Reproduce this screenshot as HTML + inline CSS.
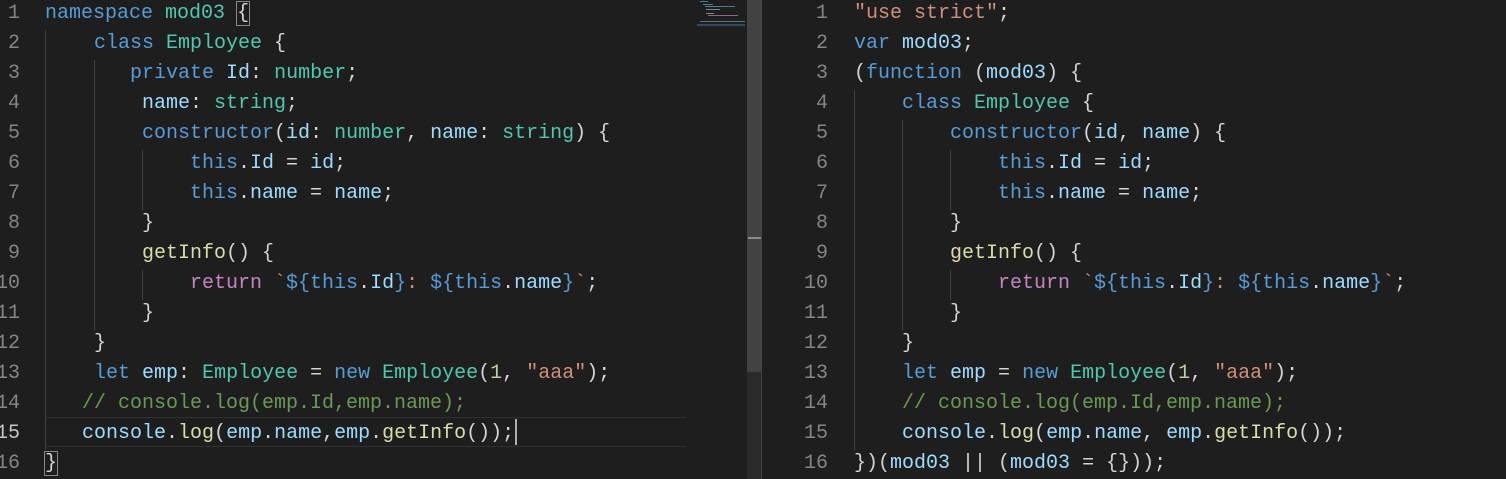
<!DOCTYPE html>
<html><head><meta charset="utf-8">
<style>
html,body{margin:0;padding:0;background:#1e1e1e;width:1506px;height:479px;overflow:hidden;}
body{position:relative;font-family:"Liberation Mono",monospace;font-size:20px;color:#d4d4d4;}
.l{position:absolute;height:30px;line-height:28px;white-space:pre;}
.n{position:absolute;height:30px;line-height:28px;color:#858585;text-align:right;width:40px;}
.k{color:#569cd6}.t{color:#4ec9b0}.v{color:#9cdcfe}.f{color:#dcdcaa}.s{color:#ce9178}.c{color:#6a9955}.r{color:#c586c0}.m{color:#b5cea8}
.g{position:absolute;width:1px;background:#404040;}
.box{outline:1px solid #888;}
</style></head><body>
<div style="position:absolute;left:747px;top:0;width:15px;height:479px;background:#2a2a2a"></div>
<div style="position:absolute;left:747px;top:0;width:14px;height:372px;background:#424242"></div>
<div style="position:absolute;left:748px;top:237px;width:13px;height:2px;background:#8a8a8a"></div>
<div style="position:absolute;left:761px;top:0;width:1px;height:479px;background:#444"></div>
<div style="position:absolute;left:700px;top:1px;width:8px;height:1px;background:#4a7a9a"></div>
<div style="position:absolute;left:703px;top:4px;width:10px;height:1px;background:#3f8a7a"></div>
<div style="position:absolute;left:705px;top:6px;width:30px;height:1px;background:#5a7a8a"></div>
<div style="position:absolute;left:706px;top:9px;width:14px;height:1px;background:#6a8aa0"></div>
<div style="position:absolute;left:706px;top:13px;width:8px;height:1px;background:#8a8a6a"></div>
<div style="position:absolute;left:708px;top:15px;width:30px;height:1px;background:#8a6a8a"></div>
<div style="position:absolute;left:700px;top:21px;width:45px;height:1px;background:#5a7a6a"></div>
<div style="position:absolute;left:697px;top:24px;width:48px;height:2px;background:#2c4a66"></div>

<div style="position:absolute;left:45px;top:417px;width:641px;height:1px;background:#303030"></div>
<div style="position:absolute;left:45px;top:446px;width:641px;height:1px;background:#303030"></div>

<div class="g" style="left:45px;top:30px;height:420px"></div>
<div class="g" style="left:94px;top:60px;height:270px"></div>
<div class="g" style="left:142px;top:150px;height:60px"></div>
<div class="g" style="left:142px;top:270px;height:30px"></div>

<div class="n" style="left:-20px;top:0">1</div>
<div class="n" style="left:-20px;top:30px">2</div>
<div class="n" style="left:-20px;top:60px">3</div>
<div class="n" style="left:-20px;top:90px">4</div>
<div class="n" style="left:-20px;top:120px">5</div>
<div class="n" style="left:-20px;top:150px">6</div>
<div class="n" style="left:-20px;top:180px">7</div>
<div class="n" style="left:-20px;top:210px">8</div>
<div class="n" style="left:-20px;top:240px">9</div>
<div class="n" style="left:-20px;top:270px">10</div>
<div class="n" style="left:-20px;top:300px">11</div>
<div class="n" style="left:-20px;top:330px">12</div>
<div class="n" style="left:-20px;top:360px">13</div>
<div class="n" style="left:-20px;top:390px">14</div>
<div class="n" style="left:-20px;top:420px;color:#c6c6c6">15</div>
<div class="n" style="left:-20px;top:450px">16</div>

<div class="l" style="left:45px;top:0"><span class="k">namespace</span> <span class="t">mod03</span> <span class="box">{</span></div>
<div class="l" style="left:94px;top:30px"><span class="k">class</span> <span class="t">Employee</span> {</div>
<div class="l" style="left:130px;top:60px"><span class="k">private</span> <span class="v">Id</span>: <span class="t">number</span>;</div>
<div class="l" style="left:142px;top:90px"><span class="v">name</span>: <span class="t">string</span>;</div>
<div class="l" style="left:142px;top:120px"><span class="k">constructor</span>(<span class="v">id</span>: <span class="t">number</span>, <span class="v">name</span>: <span class="t">string</span>) {</div>
<div class="l" style="left:190px;top:150px"><span class="k">this</span>.<span class="v">Id</span> = <span class="v">id</span>;</div>
<div class="l" style="left:190px;top:180px"><span class="k">this</span>.<span class="v">name</span> = <span class="v">name</span>;</div>
<div class="l" style="left:142px;top:210px">}</div>
<div class="l" style="left:142px;top:240px"><span class="f">getInfo</span>() {</div>
<div class="l" style="left:190px;top:270px"><span class="r">return</span> <span class="s">`</span><span class="k">${this</span>.<span class="v">Id</span><span class="k">}</span><span class="s">: </span><span class="k">${this</span>.<span class="v">name</span><span class="k">}</span><span class="s">`</span>;</div>
<div class="l" style="left:142px;top:300px">}</div>
<div class="l" style="left:94px;top:330px">}</div>
<div class="l" style="left:94px;top:360px"><span class="k">let</span> <span class="v">emp</span>: <span class="t">Employee</span> = <span class="k">new</span> <span class="t">Employee</span>(<span class="m">1</span>, <span class="s">"aaa"</span>);</div>
<div class="l" style="left:82px;top:390px"><span class="c">// console.log(emp.Id,emp.name);</span></div>
<div class="l" style="left:82px;top:420px"><span class="v">console</span>.<span class="f">log</span>(<span class="v">emp</span>.<span class="v">name</span>,<span class="v">emp</span>.<span class="f">getInfo</span>());</div>
<div style="position:absolute;left:515px;top:419px;width:2px;height:26px;background:#aeafad"></div>
<div class="l" style="left:45px;top:450px"><span class="box">}</span></div>

<div class="g" style="left:854px;top:90px;height:360px"></div>
<div class="g" style="left:902px;top:120px;height:210px"></div>
<div class="g" style="left:950px;top:150px;height:60px"></div>
<div class="g" style="left:950px;top:270px;height:30px"></div>

<div class="n" style="left:788px;top:0">1</div>
<div class="n" style="left:788px;top:30px">2</div>
<div class="n" style="left:788px;top:60px">3</div>
<div class="n" style="left:788px;top:90px">4</div>
<div class="n" style="left:788px;top:120px">5</div>
<div class="n" style="left:788px;top:150px">6</div>
<div class="n" style="left:788px;top:180px">7</div>
<div class="n" style="left:788px;top:210px">8</div>
<div class="n" style="left:788px;top:240px">9</div>
<div class="n" style="left:788px;top:270px">10</div>
<div class="n" style="left:788px;top:300px">11</div>
<div class="n" style="left:788px;top:330px">12</div>
<div class="n" style="left:788px;top:360px">13</div>
<div class="n" style="left:788px;top:390px">14</div>
<div class="n" style="left:788px;top:420px">15</div>
<div class="n" style="left:788px;top:450px">16</div>

<div class="l" style="left:854px;top:0"><span class="s">"use strict"</span>;</div>
<div class="l" style="left:854px;top:30px"><span class="k">var</span> <span class="v">mod03</span>;</div>
<div class="l" style="left:854px;top:60px">(<span class="k">function</span> (<span class="v">mod03</span>) {</div>
<div class="l" style="left:902px;top:90px"><span class="k">class</span> <span class="t">Employee</span> {</div>
<div class="l" style="left:950px;top:120px"><span class="k">constructor</span>(<span class="v">id</span>, <span class="v">name</span>) {</div>
<div class="l" style="left:998px;top:150px"><span class="k">this</span>.<span class="v">Id</span> = <span class="v">id</span>;</div>
<div class="l" style="left:998px;top:180px"><span class="k">this</span>.<span class="v">name</span> = <span class="v">name</span>;</div>
<div class="l" style="left:950px;top:210px">}</div>
<div class="l" style="left:950px;top:240px"><span class="f">getInfo</span>() {</div>
<div class="l" style="left:998px;top:270px"><span class="r">return</span> <span class="s">`</span><span class="k">${this</span>.<span class="v">Id</span><span class="k">}</span><span class="s">: </span><span class="k">${this</span>.<span class="v">name</span><span class="k">}</span><span class="s">`</span>;</div>
<div class="l" style="left:950px;top:300px">}</div>
<div class="l" style="left:902px;top:330px">}</div>
<div class="l" style="left:902px;top:360px"><span class="k">let</span> <span class="v">emp</span> = <span class="k">new</span> <span class="t">Employee</span>(<span class="m">1</span>, <span class="s">"aaa"</span>);</div>
<div class="l" style="left:902px;top:390px"><span class="c">// console.log(emp.Id,emp.name);</span></div>
<div class="l" style="left:902px;top:420px"><span class="v">console</span>.<span class="f">log</span>(<span class="v">emp</span>.<span class="v">name</span>, <span class="v">emp</span>.<span class="f">getInfo</span>());</div>
<div class="l" style="left:854px;top:450px">})(<span class="v">mod03</span> || (<span class="v">mod03</span> = {}));</div>
</body></html>
